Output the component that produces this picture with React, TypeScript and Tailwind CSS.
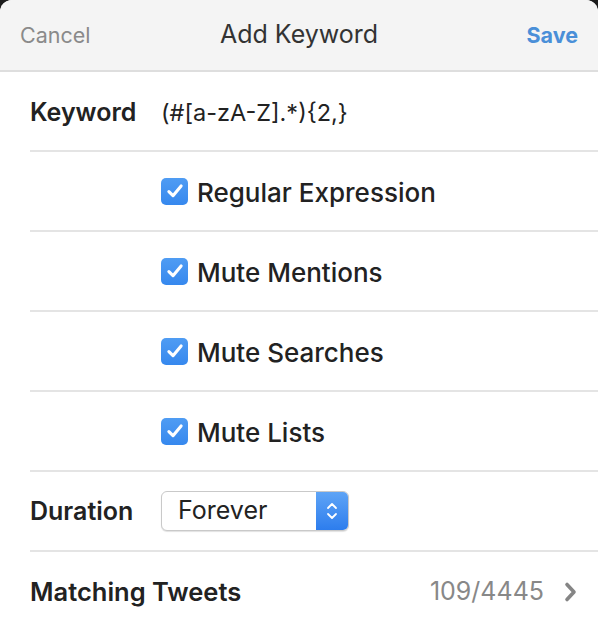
import React from "react";

const font = { fontFamily: "Inter, 'Noto Sans', sans-serif" };

function Check() {
  return (
    <span className="w-[27px] h-[27px] rounded-[5px] bg-gradient-to-b from-[#4f9cf3] to-[#3688ee] flex items-center justify-center shrink-0">
      <svg width="20" height="20" viewBox="0 0 18 18" fill="none">
        <path d="M3.5 9.5 L7.2 13.2 L14.5 4.5" stroke="white" strokeWidth="2.8" strokeLinecap="round" strokeLinejoin="round" />
      </svg>
    </span>
  );
}

function Sep() {
  return <div className="ml-[30px] h-[2px] bg-[#e4e4e4]" />;
}

function CheckRow({ label }: { label: string }) {
  return (
    <div className="h-[78px] flex items-center pl-[161px] gap-[9px]">
      <Check />
      <span className="text-[26px] font-medium text-[#222] pt-[2px]">{label}</span>
    </div>
  );
}

export default function App() {
  return (
    <div className="w-[598px] h-[628px] bg-[#1c1c1c] overflow-hidden" style={font}>
      <div className="w-[598px] h-[640px] bg-white rounded-[12px] overflow-hidden">
        <div className="h-[72px] bg-[#f4f4f4] border-b-2 border-[#dedede] flex items-center justify-between px-[20px] relative">
          <span className="text-[21.5px] text-[#8a8a8a]">Cancel</span>
          <span className="absolute left-0 right-0 text-center text-[25px] text-[#333] pointer-events-none">Add Keyword</span>
          <span className="text-[21.5px] font-bold text-[#4a8fd8]">Save</span>
        </div>
        <div className="h-[78px] flex items-center pl-[30px] pt-[4px]">
          <span className="w-[131px] text-[25px] font-semibold text-[#222]">Keyword</span>
          <span className="text-[23.5px] text-[#222]">(#[a-zA-Z].*){"{"}2,{"}"}</span>
        </div>
        <Sep />
        <CheckRow label="Regular Expression" />
        <Sep />
        <CheckRow label="Mute Mentions" />
        <Sep />
        <CheckRow label="Mute Searches" />
        <Sep />
        <CheckRow label="Mute Lists" />
        <Sep />
        <div className="h-[78px] flex items-center pl-[30px]">
          <span className="w-[131px] text-[25px] font-semibold text-[#222] pt-[2px]">Duration</span>
          <div className="w-[188px] h-[40px] rounded-[6px] border border-[#c9c9c9] bg-white shadow-[0_1px_1px_rgba(0,0,0,0.12)] flex overflow-hidden">
            <span className="flex-1 flex items-center pl-[16px] text-[25px] text-[#222]">Forever</span>
            <span className="w-[32px] bg-gradient-to-b from-[#5ea4f6] to-[#2d7ded] flex items-center justify-center">
              <svg width="14" height="24" viewBox="0 0 14 24" fill="none">
                <path d="M3 9 L7 5 L11 9" stroke="white" strokeWidth="1.8" strokeLinecap="round" strokeLinejoin="round" />
                <path d="M3 15 L7 19 L11 15" stroke="white" strokeWidth="1.8" strokeLinecap="round" strokeLinejoin="round" />
              </svg>
            </span>
          </div>
        </div>
        <Sep />
        <div className="h-[78px] flex items-center pl-[30px] pr-[20px] pt-[2px]">
          <span className="flex-1 text-[25.5px] font-semibold text-[#222]">Matching Tweets</span>
          <span className="text-[25px] text-[#888]">109/4445</span>
          <svg className="ml-[19px]" width="15" height="22" viewBox="0 0 15 22" fill="none">
            <path d="M4 3.5 L11 11 L4 18.5" stroke="#858585" strokeWidth="3.6" strokeLinecap="round" strokeLinejoin="round" />
          </svg>
        </div>
      </div>
    </div>
  );
}
